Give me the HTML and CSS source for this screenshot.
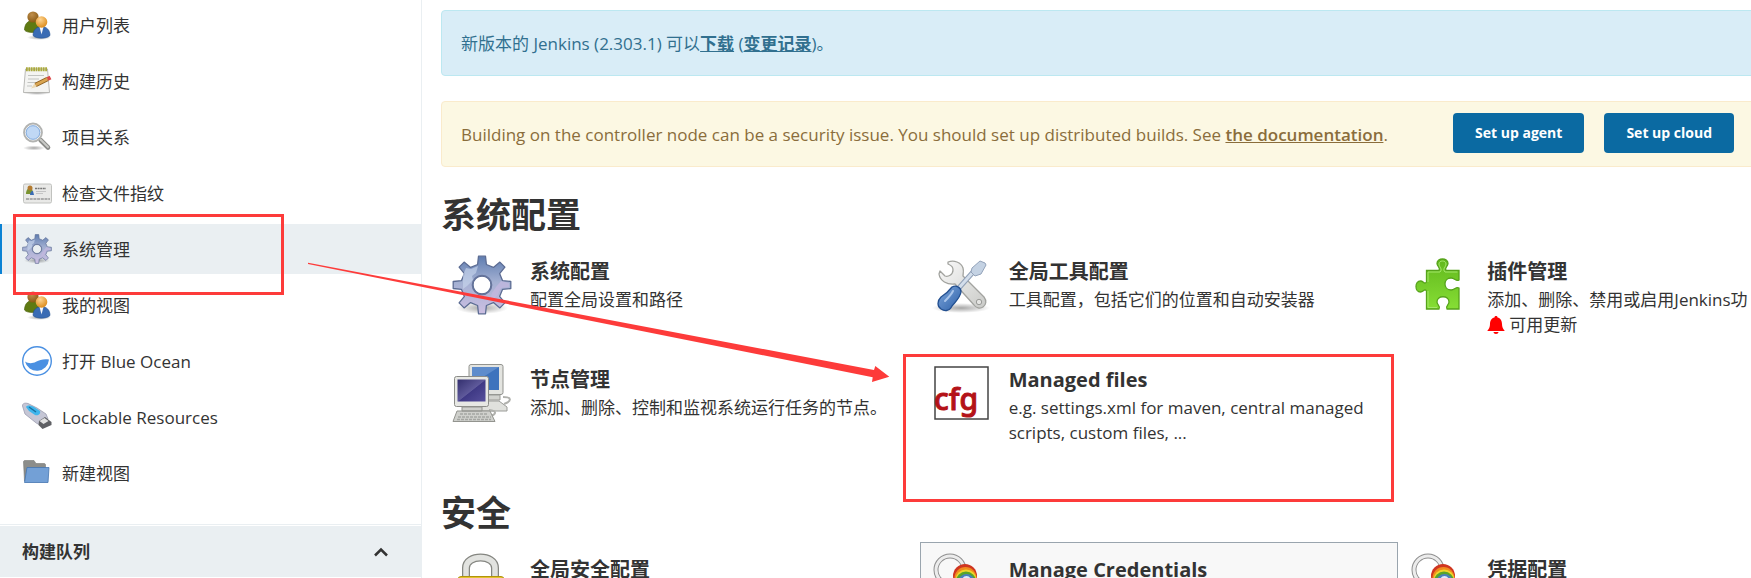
FILE: index.html
```html
<!DOCTYPE html>
<html lang="zh-CN">
<head>
<meta charset="utf-8">
<title>系统管理 [Jenkins]</title>
<link rel="stylesheet" href="styles.css">
</head>
<body>
<svg class="defs" aria-hidden="true">
  <defs>
    <linearGradient id="gearFill" x1="0" y1="0" x2="0" y2="1"><stop offset="0" stop-color="#5f7db0"/><stop offset=".45" stop-color="#a3b0d2"/><stop offset="1" stop-color="#cdbfe2"/></linearGradient>
    <linearGradient id="steel" x1="0" y1="0" x2="1" y2="1"><stop offset="0" stop-color="#fafafa"/><stop offset="1" stop-color="#c9cac7"/></linearGradient>
    <linearGradient id="blueFill" x1="0" y1="0" x2="1" y2="1"><stop offset="0" stop-color="#7fa8dc"/><stop offset="1" stop-color="#2c5fa8"/></linearGradient>
    <linearGradient id="greenFill" x1="0" y1="0" x2="0" y2="1"><stop offset="0" stop-color="#62b81d"/><stop offset="1" stop-color="#86de35"/></linearGradient>
    <linearGradient id="screenNavy" x1="0" y1="0" x2="1" y2="1"><stop offset="0" stop-color="#332f6e"/><stop offset=".5" stop-color="#5f5a9b"/><stop offset=".52" stop-color="#3f3985"/><stop offset="1" stop-color="#57509c"/></linearGradient>
    <radialGradient id="brown" cx=".4" cy=".3" r=".7"><stop offset="0" stop-color="#c08f4c"/><stop offset="1" stop-color="#8a5a14"/></radialGradient>
    <radialGradient id="orange" cx=".4" cy=".3" r=".7"><stop offset="0" stop-color="#ffd591"/><stop offset="1" stop-color="#dd8c1c"/></radialGradient>
    <radialGradient id="shade"><stop offset="0" stop-color="#000" stop-opacity=".35"/><stop offset="1" stop-color="#000" stop-opacity="0"/></radialGradient>
  </defs>
  <symbol id="gear" viewBox="0 0 60 60">
    <ellipse cx="30" cy="53" rx="26" ry="6" fill="url(#shade)"/>
    <path fill="url(#gearFill)" fill-rule="evenodd" stroke="#5c6c93" stroke-width="1.3" stroke-linejoin="round" d="M25.6 9.5 26.5 1.2H33.5L34.4 9.5 41.4 12.4 47.9 7.1 52.9 12.1 47.6 18.6 50.5 25.6 58.8 26.5V33.5L50.5 34.4 47.6 41.4 52.9 47.9 47.9 52.9 41.4 47.6 34.4 50.5 33.5 58.8H26.5L25.6 50.5 18.6 47.6 12.1 52.9 7.1 47.9 12.4 41.4 9.5 34.4 1.2 33.5V26.5L9.5 25.6 12.4 18.6 7.1 12.1 12.1 7.1 18.6 12.4ZM30 21a9 9 0 1 0 0 18 9 9 0 0 0 0-18Z"/>
    <path fill="#c8d6ec" opacity=".65" d="M11 20 14 13 19 14 26 11 24 18 20 21 21 25 15 31 11 34Z"/>
    <path fill="#c5b8df" opacity=".7" d="M49 26 57 28V32L49 33 45 41 38 46 40 38 44 32Z"/>
    <circle cx="30" cy="30" r="9.6" fill="none" stroke="#65749b" stroke-width="1.5"/>
  </symbol>
  <symbol id="users" viewBox="0 0 30 30">
    <ellipse cx="17" cy="27.500" rx="12" ry="2.500" fill="url(#shade)"/>
    <path fill="#5f7a12" stroke="#465c08" stroke-width=".6" d="M2.500 20c0-5.500 3-9.500 8-9.500S18.500 14 18.500 20c-2 3-14 3.500-16 0Z"/>
    <circle cx="11" cy="7" r="5.600" fill="url(#brown)"/>
    <path fill="#3a6cb4" stroke="#24508f" stroke-width=".6" d="M11 25.500c0-5.500 3.500-9 8.500-9s8.500 3.500 8.500 9c-2.500 3.500-14.500 3.500-17 0Z"/>
    <path fill="#f4f7fc" d="M17.500 17h4l-2 7.500Z"/>
    <circle cx="19.500" cy="12" r="5.800" fill="url(#orange)"/>
  </symbol>
  <symbol id="keyring" viewBox="0 0 60 60">
    <circle cx="19" cy="17" r="14" fill="none" stroke="#8f8f8f" stroke-width="5"/>
    <circle cx="19" cy="17" r="14" fill="none" stroke="#ececec" stroke-width="3"/>
    <circle cx="34" cy="23" r="12" fill="#cf3520"/>
    <circle cx="34.500" cy="25" r="11" fill="#f08b1d"/>
    <circle cx="35" cy="27" r="10.500" fill="#f0d52b"/>
    <circle cx="35" cy="28.500" r="10" fill="#58a52c"/>
    <circle cx="35.500" cy="29" r="8" fill="#4a80bd"/>
    <path fill="none" stroke="#dcecff" stroke-width="2" d="M32 27c1-4 6-4 7 0"/>
  </symbol>
</svg>

<div class="page">
  <aside class="side">
    <nav class="tasks">
      <a class="task" href="#"><svg class="task-icon"><use href="#users"/></svg>用户列表</a>
      <a class="task" href="#"><svg class="task-icon" viewBox="0 0 30 30">
        <ellipse cx="15" cy="27" rx="14" ry="2" fill="url(#shade)"/>
        <path fill="#f4f4f2" stroke="#a9aaa6" stroke-width=".8" d="M3.500 3h22l2 23.500h-26Z"/>
        <path stroke="#aaa93c" stroke-width="4" stroke-dasharray="1.800 .6" d="M4 3.300h21.500"/>
        <path stroke="#c2c4c1" stroke-width="1.200" d="M6 9.500h16M6 13h11M5.500 16.500h9M5 20h5"/>
        <path stroke="#8a5c1c" stroke-width="4.200" d="m13.500 19 12-6"/><path stroke="#d9a552" stroke-width="2.800" d="m13.500 19 12-6"/>
        <path fill="#ecd9b2" d="m9 22.500 3.500-5 2 3.500Z"/><path stroke="#dc4848" stroke-width="4" d="m25.500 13 3-1.500"/>
      </svg>构建历史</a>
      <a class="task" href="#"><svg class="task-icon" viewBox="0 0 30 30">
        <ellipse cx="12" cy="26" rx="11" ry="2.500" fill="url(#shade)"/>
        <path stroke="#8b8c89" stroke-width="4.600" stroke-linecap="round" d="m18.500 18 7.500 7.500"/><path stroke="#c9cac7" stroke-width="2" stroke-linecap="round" d="m18.500 17.500 7.500 7.500"/>
        <circle cx="11" cy="10.500" r="8.700" fill="#c0d8f5" stroke="#b2b3b1" stroke-width="2.400"/>
        <circle cx="11" cy="10.500" r="7.600" fill="none" stroke="#f2f2f2" stroke-width="1"/>
        <circle cx="11" cy="10.500" r="6.800" fill="none" stroke="#87afe0" stroke-width="1"/>
      </svg>项目关系</a>
      <a class="task" href="#"><svg class="task-icon" viewBox="0 0 30 30">
        <rect x="1.500" y="6" width="28" height="19" rx="1.500" fill="#e9e9e7" stroke="#c1c2bf"/>
        <path fill="#7a9430" d="M4 16c0-4 2-6 4-6s3 2 3 6Z"/><path fill="#3a6cb4" d="M8 17c0-2 1-4 3-4l1 4Z"/><circle cx="8" cy="10" r="2.500" fill="#b37b30"/>
        <path stroke="#777" stroke-width="1.500" stroke-dasharray="2 .6" d="M13 10.500h11"/><path stroke="#c4c4c4" d="M14 13.500h10M14 15.500h7"/>
        <path stroke="#989898" stroke-width="1.500" stroke-dasharray="3 .7" d="M4 21h24"/>
      </svg>检查文件指纹</a>
      <a class="task task-active" href="#" aria-current="page"><svg class="task-icon"><use href="#gear"/></svg>系统管理</a>
      <a class="task" href="#"><svg class="task-icon"><use href="#users"/></svg>我的视图</a>
      <a class="task" href="#"><svg class="task-icon" viewBox="0 0 30 30">
        <circle cx="15" cy="15" r="14.300" fill="#fff" stroke="#4a90e2" stroke-width="1.400"/>
        <path fill="#4a90e2" d="M3 15.500c3 2 7 2.500 11 .3 4-2.300 8-3 13-2.300A12.200 12.200 0 0 1 3 15.500Z"/>
      </svg><span>打开 <span class="latin">Blue Ocean</span></span></a>
      <a class="task" href="#"><svg class="task-icon" viewBox="0 0 30 30">
        <path fill="#c5c6d5" stroke="#9a9cae" stroke-width=".8" d="M.5 4C.5 1 3 .8 6 1.500l9 4.500 9 6 2 5-5 6c-3 0-6-1-8-3L3 12Z"/>
        <path fill="#3eb5ec" d="M4 5c1-2 4-2 8 0l6 4c1 3-2 5-5 4L7 9Z"/><path stroke="#176f9e" stroke-width="1.500" d="m7 5 7 5"/>
        <path fill="#5f6064" d="m17 19 6-4 6.500 5v3l-9 4-4-4Z"/><path fill="#e2e2e2" d="m17.500 19 5-3 4 3-5 3Z"/>
      </svg><span class="latin">Lockable Resources</span></a>
      <a class="task" href="#"><svg class="task-icon" viewBox="0 0 30 30">
        <path fill="#8c8d8a" stroke="#777875" stroke-width=".6" d="M1.500 4c0-1 .5-1.500 1.500-1.500h9l2 3h8c1 0 1.500.5 1.500 1.500V23H2.500Z"/>
        <path fill="#73a0d6" stroke="#4475b0" stroke-width=".8" d="M5 9.500h22L26 24.500H2.500Z"/>
      </svg>新建视图</a>
    </nav>
    <section class="queue">
      <header class="queue-head">
        <h2 class="queue-title">构建队列</h2>
        <button class="queue-toggle" type="button" aria-label="折叠"><svg width="16" height="12" viewBox="0 0 16 12"><path d="m2 9.500 6-6 6 6" fill="none" stroke="#333" stroke-width="2.500"/></svg></button>
      </header>
    </section>
  </aside>

  <main class="main">
    <div class="alert alert-info"><p class="alert-text">新版本的 Jenkins (2.303.1) 可以<a class="alert-link" href="#">下载</a> (<a class="alert-link" href="#">变更记录</a>)。</p></div>
    <div class="alert alert-warning">
      <p class="alert-text">Building on the controller node can be a security issue. You should set up distributed builds. See <a class="alert-link" href="#">the documentation</a>.</p>
      <div class="alert-actions"><button class="btn" type="button">Set up agent</button><button class="btn" type="button">Set up cloud</button></div>
    </div>

    <h1 class="section-title">系统配置</h1>
    <div class="cards">
      <a class="card" href="#"><svg class="card-icon"><use href="#gear"/></svg>
        <div class="card-body"><h3 class="card-title">系统配置</h3><p class="card-desc">配置全局设置和路径</p></div></a>
      <a class="card" href="#"><svg class="card-icon" viewBox="0 0 60 60">
        <ellipse cx="30" cy="53" rx="29" ry="5" fill="url(#shade)"/>
        <path fill="url(#steel)" stroke="#a2a39f" stroke-width="1.300" stroke-linejoin="round" d="M17 7c6-2 13 0 15 6 1 3 0 6 0 8l21 21c3 4 2 8-1 10s-7 1-9-2L24 29c-8 1-15-3-16-10l1-3 5 5c3 1 8-1 8-6 0-3-1-4-5-6Z"/>
        <circle cx="48" cy="47" r="2.700" fill="#e4e4e2" stroke="#9a9b98"/>
        <path stroke="#8e9eb5" stroke-width="5" d="m27 34 16-18"/><path stroke="#d3deeb" stroke-width="3" d="m27 34 16-18"/>
        <path fill="#c4d2e3" stroke="#93a3ba" stroke-linejoin="round" d="m41 13 8-7 5 2 1 2-5 9-6 2-4-4Z"/>
        <path fill="url(#blueFill)" stroke="#224f90" stroke-width="1.300" d="M21 32c4-2 9 0 9 5-1 6-5 9-9 14-3 6-8 5-11 3-4-3-4-8 0-12 5-3 8-6 11-10Z"/>
        <path stroke="#a9c5eb" stroke-width="2" stroke-linecap="round" d="M22 36c-2 4-5 7-8 10"/>
      </svg>
        <div class="card-body"><h3 class="card-title">全局工具配置</h3><p class="card-desc">工具配置，包括它们的位置和自动安装器</p></div></a>
      <a class="card" href="#"><svg class="card-icon" viewBox="0 0 60 60">
        <path fill="url(#greenFill)" stroke="#56a31b" stroke-width="1.300" d="M17.500 15.500H30c2-3-2-4-2-7 0-6 11-6 11 0 0 3-4 4-2 7H50V25c-3 2-4-2-8-2-8 0-8 12 0 12 4 0 5-4 8-2V54H38c-2-3 2-4 2-7 0-7-12-7-12 0 0 3 4 4 2 7H17.500V36c-2-3-3 1-6 1-6 0-6-11 0-11 3 0 4 4 6 1Z"/>
        <path fill="none" stroke="#a4e86a" d="M19 27V17h12c3-3-1-5-1-8 0-4 7-4 7 0 0 3-4 5-1 8h12.500M19 36v16.500h9"/>
      </svg>
        <div class="card-body"><h3 class="card-title">插件管理</h3><p class="card-desc card-desc-line">添加、删除、禁用或启用Jenkins功</p>
          <p class="card-desc card-note"><svg width="18" height="18" viewBox="0 0 18 18"><path fill="#f00" d="M9 0c1 0 1.500.5 1.500 1.500C13.500 2 15 5 15 8c0 3 1 5 2.500 6.500V15H.5v-.5C2 13 3 11 3 8c0-3 1.500-6 4.500-6.500C7.500.5 8 0 9 0ZM6.500 16h5c0 2.500-5 2.500-5 0Z"/></svg>可用更新</p></div></a>
      <a class="card" href="#"><svg class="card-icon" viewBox="0 0 60 60">
        <path fill="#e0e1dd" stroke="#9a9b97" d="M25 38h22l8 6v4H28Z"/>
        <rect x="17" y="1.500" width="34" height="30" rx="2" fill="#e3e4e0" stroke="#92938f"/>
        <rect x="20" y="4" width="27" height="23" fill="#3e73bd"/><path fill="#7ea6db" opacity=".5" d="M20 4h27L20 21Z"/>
        <path fill="#d1d2ce" stroke="#9a9b97" d="M36 32h12v5H36Z"/><path fill="none" stroke="#b0b1ad" stroke-width="2" d="M51 34c9 0 9 4 1 7M37 47c9 1 7 5 0 6"/>
        <rect x="2.500" y="13.500" width="34" height="30" rx="2" fill="#e7e8e4" stroke="#8b8c88"/>
        <rect x="5.500" y="16.500" width="28" height="22" fill="url(#screenNavy)"/>
        <path fill="#cfd0cc" stroke="#93948f" d="M10 44h20v4H10ZM5 48h33l5 10.500H1Z"/>
        <path stroke="#a5a6a2" stroke-width="1.500" stroke-dasharray="3 1" d="M8 51h28M6 54h33M5 56.500h34"/>
      </svg>
        <div class="card-body"><h3 class="card-title">节点管理</h3><p class="card-desc">添加、删除、控制和监视系统运行任务的节点。</p></div></a>
      <a class="card" href="#"><svg class="card-icon" viewBox="0 0 60 60">
        <rect x="4" y="4" width="53" height="52" fill="#fff" stroke="#444" stroke-width="1.500"/>
        <text class="cfg" x="3" y="47">cfg</text>
      </svg>
        <div class="card-body"><h3 class="card-title">Managed files</h3><p class="card-desc">e.g. settings.xml for maven, central managed scripts, custom files, ...</p></div></a>
    </div>

    <h1 class="section-title section-title-next">安全</h1>
    <div class="cards">
      <a class="card" href="#"><svg class="card-icon" viewBox="0 0 60 60">
        <path fill="none" stroke="#858681" stroke-width="8" d="M14 28V15C14 1 43 1 43 15V28"/><path fill="none" stroke="#e2e3e0" stroke-width="5.500" d="M14 28V15C14 1 43 1 43 15V28"/>
        <rect x="6" y="23.500" width="46" height="34" rx="3" fill="#e2c42c" stroke="#b1930c"/>
      </svg>
        <div class="card-body"><h3 class="card-title">全局安全配置</h3></div></a>
      <a class="card card-hover" href="#"><svg class="card-icon"><use href="#keyring"/></svg>
        <div class="card-body"><h3 class="card-title">Manage Credentials</h3></div></a>
      <a class="card" href="#"><svg class="card-icon"><use href="#keyring"/></svg>
        <div class="card-body"><h3 class="card-title">凭据配置</h3></div></a>
    </div>
  </main>
</div>

<svg class="marks" width="1400" height="510" aria-hidden="true">
  <rect x="14.500" y="215.500" width="268" height="78" fill="none" stroke="#fd3b3a" stroke-width="3"/>
  <rect x="904.500" y="355.500" width="488" height="145" fill="none" stroke="#fd3b3a" stroke-width="3"/>
  <path fill="#fd3b3a" d="M308 262.800 874 370l1.300-4 14 10.700L872 382l.7-4.700L308 264Z"/>
</svg>
</body>
</html>
```
FILE: styles.css
```css
* { box-sizing: border-box; }

body {
  margin: 0;
  height: 100vh;
  overflow: hidden;
  position: relative;
  background: #fff;
  color: #333;
  font-family: "Open Sans", "Noto Sans CJK SC", sans-serif;
  font-size: 17px;
  line-height: 25px;
}

h1, h2, h3, p { margin: 0; }
a { color: inherit; text-decoration: none; }
.defs { position: absolute; width: 0; height: 0; }

.page {
  display: flex;
  height: 100%;
  width: calc(100% + 126px);
}

.side {
  flex: 0 0 422px;
  border-right: 1px solid #eaeff2;
}

.tasks {
  display: flex;
  flex-direction: column;
  gap: 6px;
}

.task {
  display: flex;
  align-items: center;
  gap: 10px;
  height: 50px;
  padding-left: 22px;
}

.task-active {
  background: #eaeff2;
  box-shadow: inset 2px 0 #0b82d4;
}

.task-icon {
  flex: none;
  width: 30px;
  height: 30px;
}

.latin { font-weight: 500; }

.queue {
  margin-top: 26px;
  padding-top: 1px;
  border-top: 1px solid #eaeff2;
}

.queue-head {
  display: flex;
  align-items: center;
  justify-content: space-between;
  height: 51px;
  padding: 0 32px 0 22px;
  background: #eaeff2;
}

.queue-title {
  font-size: 17px;
  font-weight: 700;
}

.queue-toggle {
  display: flex;
  padding: 0;
  border: 0;
  background: none;
}

.main {
  flex: 1;
  min-width: 0;
  padding: 10px 0 0 19px;
  overflow: hidden;
}

.alert {
  display: flex;
  align-items: center;
  justify-content: space-between;
  height: 66px;
  padding: 0 142px 0 19px;
  border: 1px solid;
  border-radius: 4px;
}

.alert-info {
  margin-bottom: 25px;
  background: #d9edf7;
  border-color: #bce8f1;
  color: #31708f;
}

.alert-warning {
  background: #fcf8e3;
  border-color: #faebcc;
  color: #8a6d3b;
}

.alert-text { white-space: nowrap; }

.alert-link {
  font-weight: 700;
  text-decoration: underline;
}

.alert-warning .alert-link { font-weight: 600; }

.alert-actions {
  display: flex;
  gap: 20px;
  margin-bottom: 2px;
}

.btn {
  height: 40px;
  padding: 0 22px;
  border: 0;
  border-radius: 4px;
  background: #0b6aa2;
  color: #fff;
  font: 700 14px/20px "Open Sans", sans-serif;
}

.section-title {
  margin: 27px 0 8px;
  font-size: 35px;
  line-height: 42px;
  font-weight: 700;
}

.section-title-next { margin-top: 32px; }

.cards {
  display: grid;
  grid-template-columns: repeat(3, 1fr);
}

.card {
  display: flex;
  align-items: flex-start;
  gap: 18px;
  min-height: 108px;
  padding: 10px;
  border: 1px solid transparent;
}

.card-hover {
  background: #f8f8f8;
  border-color: #9aa5ae;
}

.card-icon {
  flex: none;
  width: 60px;
  height: 60px;
}

.card-body {
  flex: 1;
  min-width: 0;
  padding-top: 4px;
}

.card-title {
  margin-bottom: 3px;
  font-size: 20px;
  line-height: 25px;
  font-weight: 700;
}

.card-desc-line { white-space: nowrap; }

.card-note {
  display: flex;
  align-items: center;
  gap: 4px;
}

.cfg {
  font: 500 30px "Noto Sans", sans-serif;
  fill: #b41218;
  stroke: #b41218;
  stroke-width: 1px;
  stroke-linejoin: round;
}

.marks {
  position: absolute;
  top: 0;
  left: 0;
  pointer-events: none;
}
```
